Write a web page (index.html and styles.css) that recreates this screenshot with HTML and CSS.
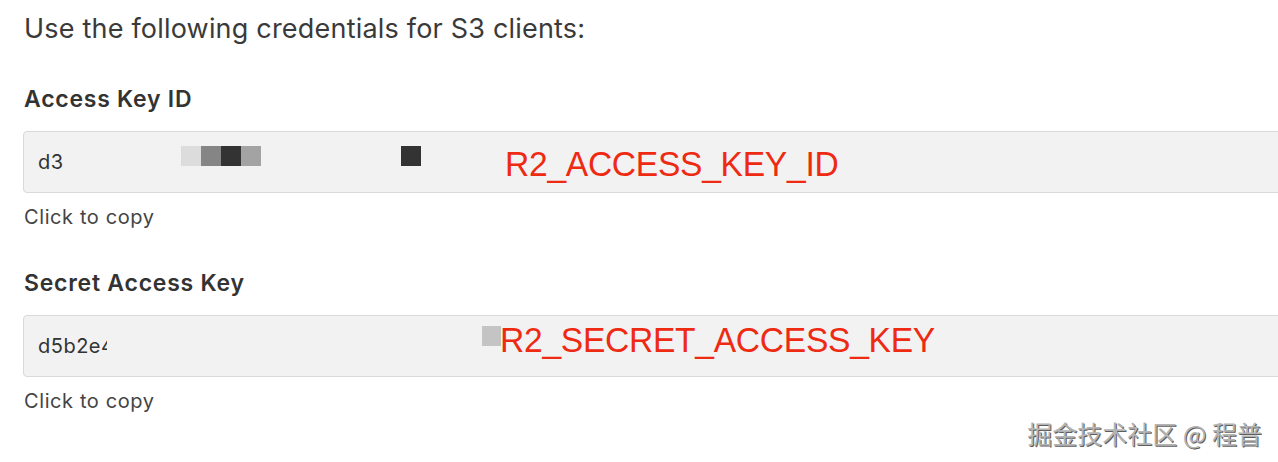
FILE: index.html
```html
<!DOCTYPE html>
<html lang="en">
<head>
  <meta charset="UTF-8" />
  <title>R2 API Token</title>
  <link rel="stylesheet" href="styles.css">
</head>
<body>
  <main class="creds">
    <p class="intro">Use the following credentials for S3 clients:</p>

    <div class="field">
      <label class="field-label">Access Key ID</label>
      <div class="key-box">
        <span class="key-value">d3</span>
        <span class="mosaic mosaic-a">
          <i class="px px-1"></i><i class="px px-2"></i><i class="px px-3"></i><i class="px px-4"></i>
        </span>
        <span class="mosaic mosaic-b"><i class="px px-3"></i></span>
        <span class="note note-id">R2_ACCESS_KEY_ID</span>
      </div>
      <div class="hint">Click to copy</div>
    </div>

    <div class="field">
      <label class="field-label">Secret Access Key</label>
      <div class="key-box">
        <span class="key-value">d5b2e4</span>
        <span class="key-fade"></span>
        <span class="mosaic mosaic-c"><i class="px px-5"></i></span>
        <span class="note note-secret">R2_SECRET_ACCESS_KEY</span>
      </div>
      <div class="hint">Click to copy</div>
    </div>
  </main>

  <div class="watermark">掘金技术社区 @ 程普</div>
</body>
</html>
```

FILE: styles.css
```css
body {
  font-family: 'Inter', 'Liberation Sans', sans-serif;
  background-color: #ffffff;
  color: #333333;
  margin: 0;
  padding: 0;
  overflow: hidden;
}
.creds {
  padding: 14px 0 0 24px;
  width: 1300px;
}
.intro {
  margin: 0;
  font-size: 27px;
  line-height: 30px;
  letter-spacing: 0.2px;
  color: #3a3a3a;
}
.field {
  margin-top: 42px;
}
.field + .field {
  margin-top: 41px;
}
.field-label {
  display: block;
  font-size: 23px;
  line-height: 26px;
  font-weight: 600;
  letter-spacing: 0.75px;
  color: #333333;
  margin-bottom: 19px;
}
.key-box {
  position: relative;
  display: flex;
  align-items: center;
  height: 60px;
  margin-left: -1px;
  padding-left: 14px;
  background-color: #f2f2f2;
  border: 1px solid #d9d9d9;
  border-radius: 4px;
}
.key-value {
  font-size: 20px;
  letter-spacing: 0.5px;
  color: #333333;
}
.key-fade {
  position: absolute;
  left: 83px;
  top: 14px;
  width: 40px;
  height: 32px;
  background-color: #f2f2f2;
}
.mosaic {
  position: absolute;
  display: flex;
}
.mosaic-a {
  left: 157px;
  top: 14px;
}
.mosaic-b {
  left: 377px;
  top: 14px;
}
.mosaic-c {
  left: 458px;
  top: 10px;
}
.px {
  display: block;
  width: 20px;
  height: 20px;
}
.px-1 { background-color: #dcdcdc; }
.px-2 { background-color: #858585; }
.px-3 { background-color: #333333; }
.px-4 { background-color: #a3a3a3; }
.px-5 { background-color: #c4c4c4; width: 19px; }
.note {
  position: absolute;
  font-family: 'Liberation Sans', Arial, sans-serif;
  font-size: 35px;
  line-height: 40px;
  color: #ee2a12;
  transform: scaleX(0.96);
  transform-origin: left center;
  letter-spacing: -0.3px;
}
.note-id {
  left: 481px;
  top: 12px;
}
.note-secret {
  left: 476px;
  top: 4px;
}
.hint {
  margin-top: 12px;
  font-size: 20px;
  line-height: 24px;
  letter-spacing: 0.6px;
  color: #444444;
}
.watermark {
  position: absolute;
  right: 16px;
  bottom: 14px;
  font-family: 'Noto Sans CJK SC', sans-serif;
  font-size: 25px;
  line-height: 30px;
  color: #b4b4b4;
  text-shadow: 1px 1px 0 #5e5e5e, -1px -1px 0 #ffffff;
}
```
